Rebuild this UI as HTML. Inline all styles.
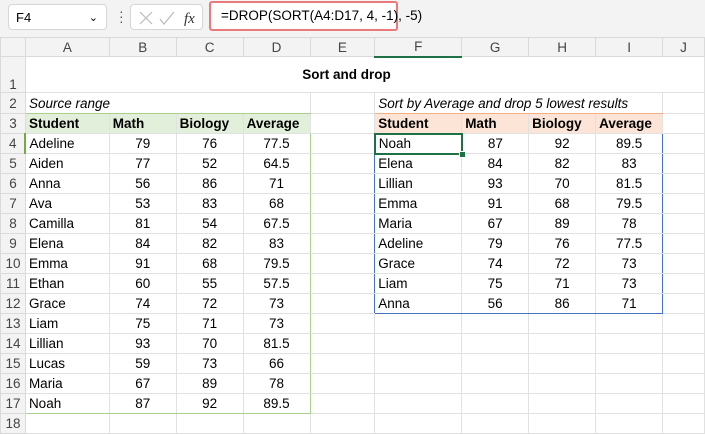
<!DOCTYPE html>
<html><head><style>
body{margin:0;width:705px;height:435px;overflow:hidden;background:#fff;font-family:"Liberation Sans",sans-serif;position:relative}
.top{position:absolute;left:0;top:0;width:705px;height:37px;background:#f3f3f3}
.nb{position:absolute;left:8px;top:4px;width:99px;height:26px;background:#fff;border:1px solid #d6d6d6;border-radius:4px;font-size:13px;line-height:26px;box-sizing:border-box;padding-left:7px}
.fxb{position:absolute;left:130px;top:4px;width:73px;height:26px;background:#fff;border:1px solid #d6d6d6;border-radius:4px;box-sizing:border-box}
.fb{position:absolute;left:209px;top:1px;width:189px;height:30px;background:#fff;border:2px solid #e9797a;border-radius:3px;box-sizing:border-box;font-size:13.5px;line-height:26px;padding-left:10px;white-space:nowrap}
table{position:absolute;left:0;top:37px;border-collapse:collapse;table-layout:fixed;font-size:13.5px}
td{border:1px solid #e1e1e1;padding:0 3px;height:20px;white-space:nowrap;overflow:hidden;box-sizing:border-box}
tr{height:20px}
tr.h td{background:#f3f3f3;color:#444;text-align:center;height:19px;border-color:#dadada}
td.r{background:#f3f3f3;color:#444;text-align:center;border-color:#dadada;padding:0}
.c{text-align:center}
.b{font-weight:bold}
.g{background:#e2efda}
.o{background:#fce4d6}
td.e{border-right:1px solid #4472c4}
</style></head><body>
<div class="top"></div>
<div class="nb">F4<span style="position:absolute;right:8px;top:0;font-size:11px">&#8964;</span></div>
<div style="position:absolute;left:119px;top:9px;color:#555;font-size:14px;line-height:5px">·<br>·<br>·</div>
<div class="fxb">
<svg width="73" height="26" style="position:absolute;left:0;top:0"><path d="M9 7l12 12M21 7L9 19" stroke="#bbb" stroke-width="1.2"/><path d="M29 14l4 5 10-12" stroke="#bbb" stroke-width="1.2" fill="none"/><text x="53" y="18" font-family="Liberation Serif" font-style="italic" font-size="15" fill="#333">fx</text></svg>
</div>
<div class="fb">=DROP(SORT(A4:D17, 4, -1), -5)</div>
<table>
<colgroup><col style="width:25px"><col style="width:84px"><col style="width:67px"><col style="width:67px"><col style="width:67px"><col style="width:65px"><col style="width:87px"><col style="width:67px"><col style="width:67px"><col style="width:67px"><col style="width:42px"></colgroup>
<tr class="h" style="height:19px"><td></td><td>A</td><td>B</td><td>C</td><td>D</td><td>E</td><td style="border-bottom:2px solid #1e7145">F</td><td>G</td><td>H</td><td>I</td><td>J</td></tr>
<tr style="height:36px"><td class="r" style="height:36px;vertical-align:bottom">1</td><td colspan="10" class="b c" style="height:36px;padding-right:0;text-indent:-40px">Sort and drop</td></tr>
<tr style="height:21px"><td class="r" style="height:21px">2</td><td colspan="4" style="font-style:italic;border-bottom:1px solid #a9d08e">Source range</td><td></td><td colspan="4" style="font-style:italic;border-bottom:1px solid #f4b084">Sort by Average and drop 5 lowest results</td><td></td></tr>
<tr><td class="r">3</td><td class="b g">Student</td><td class="b g">Math</td><td class="b g">Biology</td><td class="b g">Average</td><td></td><td class="b o">Student</td><td class="b o">Math</td><td class="b o">Biology</td><td class="b o">Average</td><td></td></tr>
<tr><td class="r">4</td><td style="border-left:2px solid #70ad47">Adeline</td><td class="c">79</td><td class="c">76</td><td class="c" style="border-right:1px solid #a9d08e">77.5</td><td></td><td style="border:2px solid #1e7145">Noah</td><td class="c">87</td><td class="c">92</td><td class="c" style="border-right:1px solid #4472c4">89.5</td><td></td></tr>
<tr><td class="r">5</td><td>Aiden</td><td class="c">77</td><td class="c">52</td><td class="c" style="border-right:1px solid #a9d08e">64.5</td><td class="e"></td><td style="border-left:1px solid #4472c4">Elena</td><td class="c">84</td><td class="c">82</td><td class="c" style="border-right:1px solid #4472c4">83</td><td></td></tr>
<tr><td class="r">6</td><td>Anna</td><td class="c">56</td><td class="c">86</td><td class="c" style="border-right:1px solid #a9d08e">71</td><td class="e"></td><td style="border-left:1px solid #4472c4">Lillian</td><td class="c">93</td><td class="c">70</td><td class="c" style="border-right:1px solid #4472c4">81.5</td><td></td></tr>
<tr><td class="r">7</td><td>Ava</td><td class="c">53</td><td class="c">83</td><td class="c" style="border-right:1px solid #a9d08e">68</td><td class="e"></td><td style="border-left:1px solid #4472c4">Emma</td><td class="c">91</td><td class="c">68</td><td class="c" style="border-right:1px solid #4472c4">79.5</td><td></td></tr>
<tr><td class="r">8</td><td>Camilla</td><td class="c">81</td><td class="c">54</td><td class="c" style="border-right:1px solid #a9d08e">67.5</td><td class="e"></td><td style="border-left:1px solid #4472c4">Maria</td><td class="c">67</td><td class="c">89</td><td class="c" style="border-right:1px solid #4472c4">78</td><td></td></tr>
<tr><td class="r">9</td><td>Elena</td><td class="c">84</td><td class="c">82</td><td class="c" style="border-right:1px solid #a9d08e">83</td><td class="e"></td><td style="border-left:1px solid #4472c4">Adeline</td><td class="c">79</td><td class="c">76</td><td class="c" style="border-right:1px solid #4472c4">77.5</td><td></td></tr>
<tr><td class="r">10</td><td>Emma</td><td class="c">91</td><td class="c">68</td><td class="c" style="border-right:1px solid #a9d08e">79.5</td><td class="e"></td><td style="border-left:1px solid #4472c4">Grace</td><td class="c">74</td><td class="c">72</td><td class="c" style="border-right:1px solid #4472c4">73</td><td></td></tr>
<tr><td class="r">11</td><td>Ethan</td><td class="c">60</td><td class="c">55</td><td class="c" style="border-right:1px solid #a9d08e">57.5</td><td class="e"></td><td style="border-left:1px solid #4472c4">Liam</td><td class="c">75</td><td class="c">71</td><td class="c" style="border-right:1px solid #4472c4">73</td><td></td></tr>
<tr><td class="r">12</td><td>Grace</td><td class="c">74</td><td class="c">72</td><td class="c" style="border-right:1px solid #a9d08e">73</td><td class="e"></td><td style="border-left:1px solid #4472c4;border-bottom:1px solid #4472c4">Anna</td><td class="c" style="border-bottom:1px solid #4472c4">56</td><td class="c" style="border-bottom:1px solid #4472c4">86</td><td class="c" style="border-right:1px solid #4472c4;border-bottom:1px solid #4472c4">71</td><td></td></tr>
<tr><td class="r">13</td><td>Liam</td><td class="c">75</td><td class="c">71</td><td class="c" style="border-right:1px solid #a9d08e">73</td><td></td><td></td><td></td><td></td><td></td><td></td></tr>
<tr><td class="r">14</td><td>Lillian</td><td class="c">93</td><td class="c">70</td><td class="c" style="border-right:1px solid #a9d08e">81.5</td><td></td><td></td><td></td><td></td><td></td><td></td></tr>
<tr><td class="r">15</td><td>Lucas</td><td class="c">59</td><td class="c">73</td><td class="c" style="border-right:1px solid #a9d08e">66</td><td></td><td></td><td></td><td></td><td></td><td></td></tr>
<tr><td class="r">16</td><td>Maria</td><td class="c">67</td><td class="c">89</td><td class="c" style="border-right:1px solid #a9d08e">78</td><td></td><td></td><td></td><td></td><td></td><td></td></tr>
<tr><td class="r">17</td><td style="border-bottom:1px solid #a9d08e">Noah</td><td class="c" style="border-bottom:1px solid #a9d08e">87</td><td class="c" style="border-bottom:1px solid #a9d08e">92</td><td class="c" style="border-right:1px solid #a9d08e;border-bottom:1px solid #a9d08e">89.5</td><td></td><td></td><td></td><td></td><td></td><td></td></tr>
<tr><td class="r">18</td><td></td><td></td><td></td><td></td><td></td><td></td><td></td><td></td><td></td><td></td></tr>
</table>
<div style="position:absolute;left:459px;top:151px;width:5px;height:5px;background:#1e7145;border:1px solid #fff"></div>
</body></html>
